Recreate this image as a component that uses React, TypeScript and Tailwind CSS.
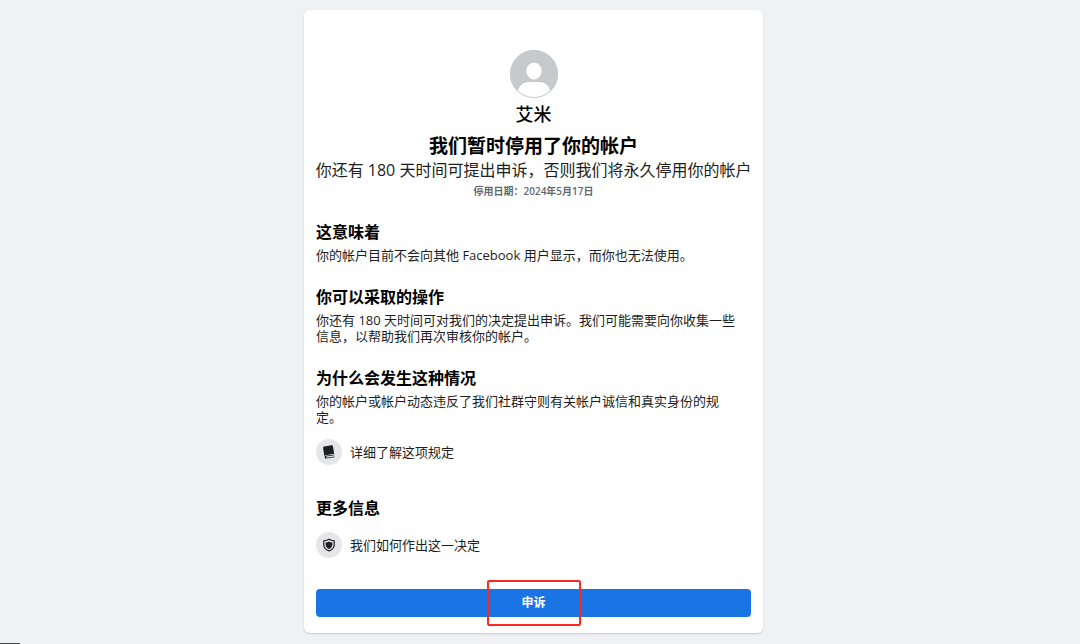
import type { ReactNode } from "react";

function Avatar() {
  return (
    <svg viewBox="0 0 48 48" className="size-12" role="img" aria-label="艾米">
      <defs>
        <clipPath id="avatar-clip">
          <circle cx="24" cy="24" r="24" />
        </clipPath>
      </defs>
      <g clipPath="url(#avatar-clip)">
        <rect width="48" height="48" fill="#c8c9cd" />
        <ellipse cx="24" cy="21" rx="7.6" ry="8.6" fill="#fff" />
        <path d="M7 42.500C9 35.500 13 32 19 32h10c6 0 10 3.500 12 10.500V48H7z" fill="#fff" />
      </g>
      <circle cx="24" cy="24" r="23.500" fill="none" stroke="#c8c9cc" />
    </svg>
  );
}

function BookIcon() {
  return (
    <svg viewBox="0 0 16 16" className="size-4" aria-hidden="true">
      <g transform="rotate(-9 8 8)" fill="#1c1e21">
        <path d="M4 1.800h7.600a1.200 1.200 0 0 1 1.200 1.200v7.600H4.200A1.500 1.500 0 0 0 2.800 11.200V3A1.200 1.200 0 0 1 4 1.800z" />
        <path d="M4.200 11.300h8.600v.7H4.600v1.300h8.200v.8H4.300a1.400 1.400 0 1 1-.1-2.800z" />
      </g>
    </svg>
  );
}

function ShieldIcon() {
  return (
    <svg viewBox="0 0 16 16" className="size-4" aria-hidden="true">
      <path
        d="M8 2.300c1.500 1 3.200 1.400 5.200 1.500v4.100c0 2.800-2 4.800-5.200 6-3.200-1.200-5.200-3.200-5.200-6V3.800C4.800 3.700 6.500 3.300 8 2.300z"
        fill="none"
        stroke="#1c1e21"
        strokeWidth="1.200"
        strokeLinejoin="round"
      />
      <path d="M8 4.600c1 .6 2 .9 3.300 1v2.500c0 1.800-1.200 3-3.300 3.900-2.100-.9-3.300-2.100-3.300-3.900V5.600c1.300-.1 2.300-.4 3.300-1z" fill="#1c1e21" />
    </svg>
  );
}

function Section({ title, children }: { title: string; children: ReactNode }) {
  return (
    <section>
      <h2 className="text-base leading-6 font-bold text-black">{title}</h2>
      {children}
    </section>
  );
}

function Detail({ children }: { children: ReactNode }) {
  return <p className="mt-[3px] text-[13px] leading-4">{children}</p>;
}

function InfoLink({ icon, children }: { icon: ReactNode; children: ReactNode }) {
  return (
    <a href="#" className="mt-3 flex items-center gap-2 text-[13px] leading-6">
      <span className="flex size-[26px] shrink-0 items-center justify-center rounded-full bg-[#e6e6e9]">{icon}</span>
      {children}
    </a>
  );
}

export default function App() {
  return (
    <div
      lang="zh-CN"
      className="relative flex min-h-screen items-start justify-center bg-[#eff1f5] pt-[10px] pr-[13px] pb-[10px] font-['Open_Sans','Noto_Sans_CJK_SC',sans-serif] text-[#1c1e21]"
    >
      <main className="w-full max-w-[459px] rounded-md bg-white px-3 pt-10 pb-4 shadow-[0_1px_2px_rgba(0,0,0,0.16)]">
        <header className="flex flex-col items-center text-center">
          <Avatar />
          <p className="mt-1 text-lg leading-6 font-medium text-black">艾米</p>
          <h1 className="mt-[6px] text-[19px] leading-7 font-bold text-black">我们暂时停用了你的帐户</h1>
          <p className="text-base leading-5 sm:whitespace-nowrap">你还有 180 天时间可提出申诉，否则我们将永久停用你的帐户</p>
          <p className="mt-[3px] text-[10px] leading-4 font-semibold text-[#65676b]">停用日期：2024年5月17日</p>
        </header>

        <div className="mt-[21px] flex flex-col gap-[22px]">
          <Section title="这意味着">
            <Detail>你的帐户目前不会向其他 Facebook 用户显示，而你也无法使用。</Detail>
          </Section>
          <Section title="你可以采取的操作">
            <Detail>
              你还有 180 天时间可对我们的决定提出申诉。我们可能需要向你收集一些
              <br />
              信息，以帮助我们再次审核你的帐户。
            </Detail>
          </Section>
          <Section title="为什么会发生这种情况">
            <Detail>
              你的帐户或帐户动态违反了我们社群守则有关帐户诚信和真实身份的规
              <br />
              定。
            </Detail>
            <div className="pt-0.5">
              <InfoLink icon={<BookIcon />}>详细了解这项规定</InfoLink>
            </div>
          </Section>
        </div>

        <div className="mt-[31px]">
          <Section title="更多信息">
            <InfoLink icon={<ShieldIcon />}>我们如何作出这一决定</InfoLink>
          </Section>
        </div>

        <div className="relative mt-[31px]">
          <button type="button" className="block h-7 w-full rounded bg-[#1b74e4] text-xs font-bold text-white">
            申诉
          </button>
          <span
            aria-hidden="true"
            className="pointer-events-none absolute top-1/2 left-1/2 h-[46px] w-[94px] -translate-x-1/2 -translate-y-1/2 rounded-xs border-2 border-[#fb2a20]"
          />
        </div>
      </main>
      <span aria-hidden="true" className="absolute bottom-0 left-0 h-px w-5 bg-[#4a4a4c]" />
    </div>
  );
}
